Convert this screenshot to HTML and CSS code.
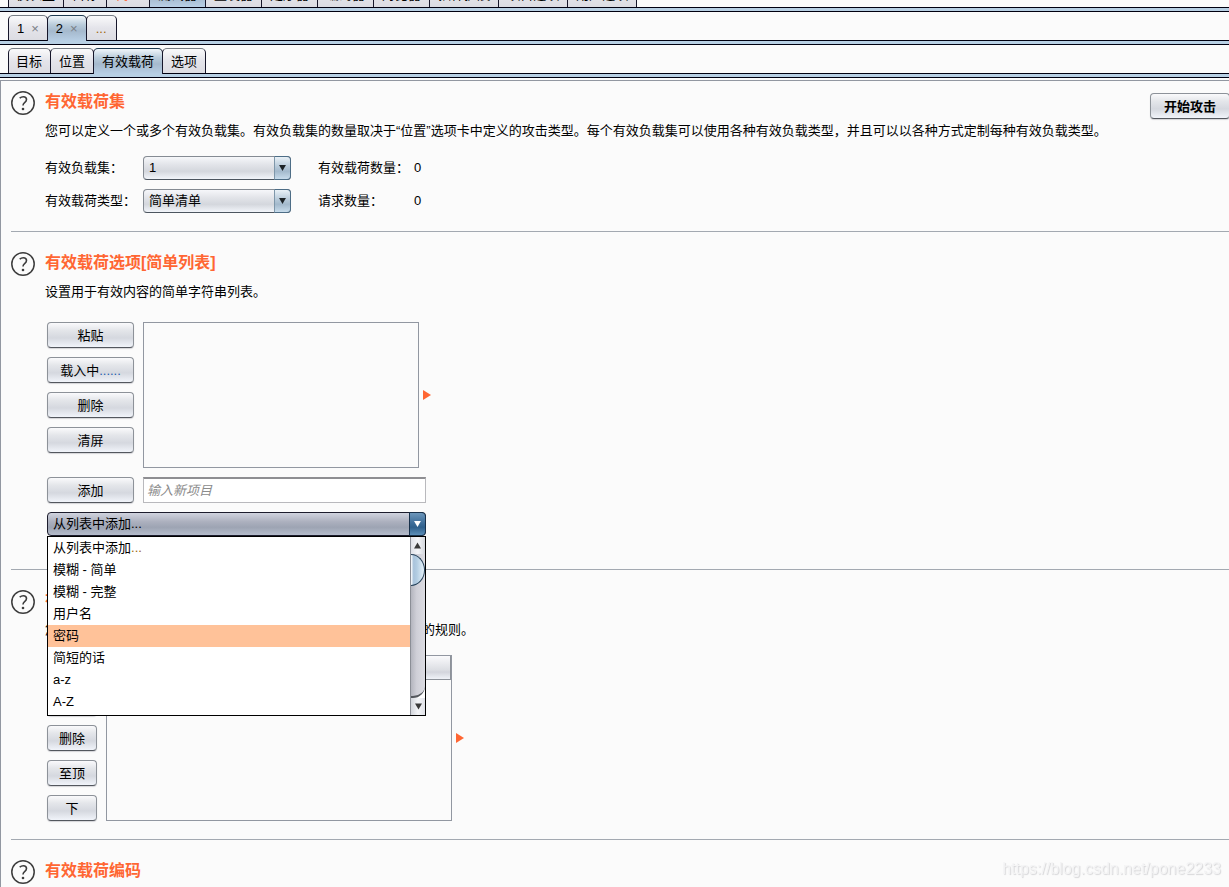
FILE: index.html
```html
<!DOCTYPE html>
<html lang="zh-CN">
<head>
<meta charset="utf-8">
<title>有效载荷</title>
<link rel="stylesheet" href="styles.css">
</head>
<body>
<svg class="defs" aria-hidden="true">
  <symbol id="help" viewBox="0 0 24 24">
    <circle cx="12" cy="12" r="11.2" fill="none" stroke="#3c3c3c" stroke-width="1.5"/>
    <path d="M8.7 7.2C9.8 6.2 11 5.7 12.3 5.7c2 0 3.2 1.1 3.2 2.8 0 1.5-.8 2.3-1.9 3.2-1.1.9-1.6 1.5-1.6 2.9" fill="none" stroke="#3c3c3c" stroke-width="1.6"/>
    <circle cx="12" cy="18" r="1.3" fill="#3c3c3c"/>
  </symbol>
  <symbol id="down" viewBox="0 0 8 7"><path d="M0 0h8L4 7z" fill="currentColor"/></symbol>
  <symbol id="right" viewBox="0 0 8 10"><path d="M0 0l8 5-8 5z" fill="currentColor"/></symbol>
</svg>

<nav class="tabs tabs-main">
  <button class="tab">仪表盘</button>
  <button class="tab">目标</button>
  <button class="tab alert">代理</button>
  <button class="tab active">测试器</button>
  <button class="tab">重发器</button>
  <button class="tab">定序器</button>
  <button class="tab">编码器</button>
  <button class="tab">对比器</button>
  <button class="tab">插件扩展</button>
  <button class="tab">项目选项</button>
  <button class="tab">用户选项</button>
</nav>
<div class="band"></div>
<nav class="tabs">
  <button class="tab closable">1<span class="close">×</span></button>
  <button class="tab closable active">2<span class="close">×</span></button>
  <button class="tab more">...</button>
</nav>
<div class="band"></div>
<nav class="tabs">
  <button class="tab">目标</button>
  <button class="tab">位置</button>
  <button class="tab active">有效载荷</button>
  <button class="tab">选项</button>
</nav>
<div class="band"></div>

<main class="panel">
  <section class="section first">
    <svg class="help"><use href="#help"/></svg>
    <div class="body">
      <h2>有效载荷集</h2>
      <p>您可以定义一个或多个有效负载集。有效负载集的数量取决于“位置”选项卡中定义的攻击类型。每个有效负载集可以使用各种有效负载类型，并且可以以各种方式定制每种有效负载类型。</p>
      <div class="fields">
        <label for="set">有效负载集：</label>
        <div class="combo">
          <select id="set"><option>1</option></select>
          <span class="drop"><svg><use href="#down"/></svg></span>
        </div>
        <span class="caption">有效载荷数量：</span><output>0</output>
        <label for="type">有效载荷类型：</label>
        <div class="combo">
          <select id="type"><option>简单清单</option></select>
          <span class="drop"><svg><use href="#down"/></svg></span>
        </div>
        <span class="caption">请求数量：</span><output>0</output>
      </div>
    </div>
    <button class="btn start">开始攻击</button>
  </section>

  <section class="section options">
    <svg class="help"><use href="#help"/></svg>
    <div class="body">
      <h2>有效载荷选项[简单列表]</h2>
      <p>设置用于有效内容的简单字符串列表。</p>
      <div class="editor">
        <div class="row">
          <div class="buttons">
            <button class="btn">粘贴</button>
            <button class="btn">载入中<span class="dots">......</span></button>
            <button class="btn">删除</button>
            <button class="btn">清屏</button>
          </div>
          <ul class="list" role="listbox" aria-label="有效载荷"></ul>
          <svg class="marker"><use href="#right"/></svg>
        </div>
        <div class="row">
          <button class="btn add">添加</button>
          <input class="entry" type="text" placeholder="输入新项目" aria-label="新项目">
        </div>
        <div class="combo open">
          <select aria-label="从列表中添加"><option>从列表中添加...</option></select>
          <span class="drop"><svg><use href="#down"/></svg></span>
          <div class="popup">
            <ul role="listbox" aria-label="列表">
              <li role="option">从列表中添加<span class="amber">...</span></li>
              <li role="option">模糊 - 简单</li>
              <li role="option">模糊 - 完整</li>
              <li role="option">用户名</li>
              <li role="option" class="selected" aria-selected="true">密码</li>
              <li role="option">简短的话</li>
              <li role="option">a-z</li>
              <li role="option">A-Z</li>
            </ul>
            <div class="scroll">
              <span class="step up"><svg><use href="#down"/></svg></span>
              <span class="track"><span class="thumb"></span></span>
              <span class="step"><svg><use href="#down"/></svg></span>
            </div>
          </div>
        </div>
      </div>
    </div>
  </section>

  <section class="section rules">
    <svg class="help"><use href="#help"/></svg>
    <div class="body">
      <h2>有效载荷处理</h2>
      <p>您可以在使用每个有效载荷之前，定义用来对其执行各种处理任务的规则。</p>
      <div class="row processing">
        <div class="buttons small">
          <button class="btn">添加</button>
          <button class="btn">编辑</button>
          <button class="btn">删除</button>
          <button class="btn">至顶</button>
          <button class="btn">下</button>
        </div>
        <table class="rule-table" aria-label="规则">
          <thead><tr><th class="enabled"></th><th></th></tr></thead>
          <tbody><tr><td colspan="2"></td></tr></tbody>
        </table>
        <svg class="marker"><use href="#right"/></svg>
      </div>
    </div>
  </section>

  <section class="section last">
    <svg class="help"><use href="#help"/></svg>
    <div class="body"><h2>有效载荷编码</h2></div>
  </section>
</main>
<div class="watermark">https://blog.csdn.net/pone2233</div>
</body>
</html>
```
FILE: styles.css
```css
* { box-sizing: border-box; }
html, body { height: 100%; }
body {
  margin: 0;
  display: flex;
  flex-direction: column;
  overflow: hidden;
  background: #fbfbfb;
  color: #000;
  font: 13px/22px "Liberation Sans", "Noto Sans CJK SC", sans-serif;
}
button, select, input { font: inherit; color: inherit; margin: 0; }
h2, p, ul { margin: 0; padding: 0; }
ul { list-style: none; }
svg { display: block; flex: none; }
.defs { position: absolute; width: 0; height: 0; }

/* tab strips */
.tabs {
  display: flex;
  align-items: flex-end;
  flex: none;
  height: 28px;
  padding-left: 8px;
}
.tab {
  flex: none;
  height: 25px;
  margin-left: -1px;
  padding: 1px 8px 0;
  border: 1px solid #16162a;
  border-top-color: #777d85;
  border-bottom: 0;
  border-radius: 5px 5px 0 0;
  background: linear-gradient(#fafafb, #e4e4ea 50%, #dcdce2);
  white-space: nowrap;
}
.tab:first-child { margin-left: 0; padding-left: 7px; }
.tab.active {
  position: relative;
  height: 26px;
  margin-bottom: -1px;
  padding-top: 0;
  border-top-color: #1e3a50;
  background: linear-gradient(#f0f6fa, #b9ccdb 35%, #a5b9cd 60%, #b8cfe5);
}
.tabs-main { height: 7px; overflow: hidden; }
.tabs-main .tab, .tabs-main .tab.active { height: 25px; margin-bottom: 0; padding-top: 0; padding-bottom: 1px; }
.tab.alert { color: #ff6633; }
.tab.closable, .tab.closable:first-child { padding-left: 8px; }
.tab.more { padding-left: 9px; padding-right: 9px; color: #a0660a; }
.close { margin-left: 7px; color: #7a8086; }
.band {
  flex: none;
  height: 5px;
  border: solid #000010;
  border-width: 1px 0;
  background: #b8d0e4;
}

/* content */
.panel {
  flex: 1 0 auto;
  margin-top: 2px;
  border: solid #9297a1;
  border-width: 1px 0 0 1px;
}
.section {
  display: grid;
  grid-template-columns: 24px minmax(0, 1fr) auto;
  column-gap: 10px;
  align-items: start;
  margin-left: 10px;
  padding: 20px 0 18px;
  border-bottom: 1px solid #a3a9b1;
}
.first { padding-top: 10px; }
.options { padding-bottom: 33px; }
.last { border-bottom: 0; }
.help { width: 24px; height: 24px; }
h2 { margin-bottom: 7px; font-size: 16px; line-height: 22px; color: #ff6633; }
.fields {
  display: grid;
  grid-template-columns: 98px 148px 96px auto;
  justify-content: start;
  align-items: center;
  row-gap: 9px;
  margin-top: 14px;
}
.caption { margin-left: 27px; white-space: nowrap; }
output { margin-left: 27px; }

.btn {
  height: 26px;
  padding: 1px 0 0;
  border: 1px solid #8d9299;
  border-bottom-color: #53575e;
  border-radius: 4px;
  background: linear-gradient(#fafafc, #e4e6ea 30%, #d5d8df 62%, #f1f4fa);
  box-shadow: 0 1px 1px #d4d4d8;
}
.start { width: 80px; margin: 2px -1px 0 0; font-weight: bold; }

.combo { position: relative; height: 24px; }
.combo select {
  display: block;
  width: 100%;
  height: 24px;
  padding: 0 22px 0 5px;
  appearance: none;
  border: 1px solid #858b93;
  border-bottom-color: #4c555f;
  border-radius: 4px;
  background: linear-gradient(#f6f7fa, #e2e4e9 35%, #d4d7dd 65%, #f2f5fa);
}
.drop {
  position: absolute;
  inset: 0 0 0 auto;
  display: grid;
  place-items: center;
  width: 17px;
  border: 1px solid #4d6d86;
  border-left-color: #7e97aa;
  border-radius: 0 4px 4px 0;
  background: linear-gradient(#e9f1f7, #b5c8d8 45%, #a3b9cc 65%, #c8dcec);
  color: #1c2226;
  pointer-events: none;
}
.drop svg { width: 7px; height: 6px; }

.editor { display: flex; flex-direction: column; gap: 9px; margin: 19px 0 0 2px; }
.row { display: flex; gap: 9px; }
.buttons { display: flex; flex-direction: column; gap: 9px; width: 87px; }
.buttons.small { width: 50px; }
.dots { color: #1c5cae; }
.list { width: 276px; height: 146px; border: 1px solid #9297a1; }
.marker { width: 8px; height: 10px; align-self: center; margin-left: -5px; color: #ff6633; }
.add { width: 87px; }
.entry {
  width: 283px;
  height: 26px;
  padding: 0 3px;
  border: 1px solid #b9b9bd;
  border-top: 2px solid #8e8e92;
  background: #fff;
}
.entry::placeholder { color: #8c8c8c; font-style: italic; opacity: 1; }

.open { width: 379px; }
.open select {
  border-color: #1c1c2c;
  background: linear-gradient(#d0d3de, #acb0be 40%, #9da4b3 65%, #b5bccb);
}
.open .drop {
  border-color: #17304a;
  background: linear-gradient(#6d97bb, #3e6e9a 45%, #2f608c 65%, #5b8eb8);
  color: #fff;
}
.popup {
  position: absolute;
  top: 24px;
  left: 0;
  z-index: 2;
  display: flex;
  width: 100%;
  border: 1px solid #000;
  background: #fff;
}
.popup ul { flex: 1; padding-bottom: 2px; }
.popup li { padding: 0 5px; line-height: 22px; }
.popup .selected { background: #ffc299; }
.amber { color: #a0660a; }
.scroll { display: flex; flex-direction: column; width: 15px; border-left: 1px solid #8b8e96; }
.step {
  display: grid;
  place-items: center;
  height: 17px;
  background: linear-gradient(90deg, #d3d6dc, #f4f5f8 50%, #e0e2e8);
  color: #3a3a3a;
}
.step svg { width: 7px; height: 7px; }
.up { transform: rotate(180deg); }
.track {
  flex: 1;
  border-bottom: 2px solid #55585e;
  border-radius: 0 0 12px 0;
  background: linear-gradient(90deg, #b4b5be, #cfcfd7 40%, #dcdce2);
}
.thumb {
  display: block;
  height: 32px;
  border: 1px solid #27425a;
  border-left: 0;
  border-radius: 0 14px 14px 0 / 0 16px 16px 0;
  background: linear-gradient(90deg, #fff, #a9c3db 20%, #b3cde2 45%, #e6f2fa);
}

.processing { margin: 14px 0 0 2px; }
.rule-table {
  width: 346px;
  border: 1px solid #9297a1;
  border-spacing: 0;
}
.rule-table th {
  height: 24px;
  padding: 0;
  border: solid #8d9299;
  border-width: 0 1px 1px 0;
  background: linear-gradient(#fafafc, #dcdee3 60%, #d3d5dc 70%, #f0f3f8);
}
.rule-table .enabled { width: 60px; }
.rule-table td { padding: 0; }

.watermark {
  position: fixed;
  right: 8px;
  bottom: 7px;
  color: #f4f4f5;
  font-size: 16px;
  text-shadow: 1px 1px 1px #d6d6d8;
  pointer-events: none;
}
```
